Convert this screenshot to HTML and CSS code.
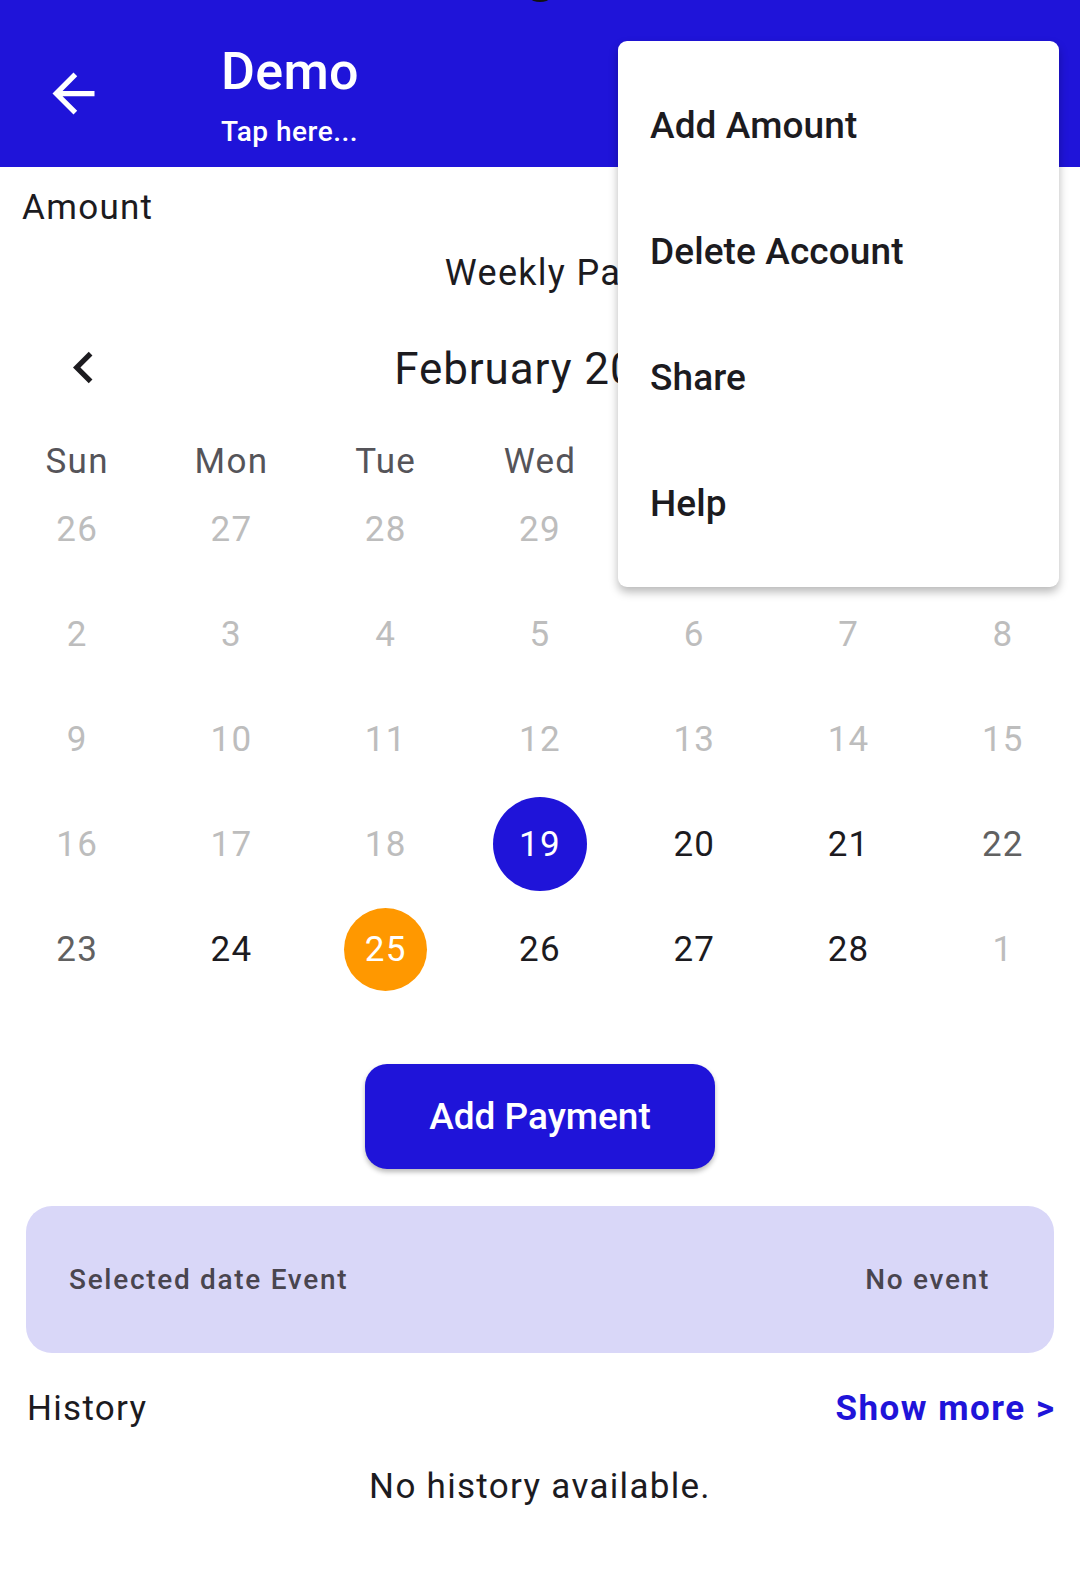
FILE: index.html
```html
<!DOCTYPE html>
<html lang="en">
<head>
<meta charset="utf-8">
<title>Demo</title>
<link rel="stylesheet" href="styles.css">
</head>
<body>
<div class="screen">
  <header class="appbar">
    <svg class="back" viewBox="0 0 24 24" width="63" height="63"><path fill="#fff" d="M20 11H7.83l5.59-5.59L12 4l-8 8 8 8 1.41-1.41L7.83 13H20v-2z"/></svg>
    <div class="titles">
      <div class="title">Demo</div>
      <div class="subtitle">Tap here...</div>
    </div>
  </header>
  <div class="notch"></div>

  <div class="amount">Amount</div>
  <div class="weekly">Weekly Pay</div>

  <div class="cal-head">
    <svg class="chev" viewBox="0 0 24 24" width="63" height="63"><path fill="#1c1b1f" d="M15.41 7.41L14 6l-6 6 6 6 1.41-1.41L10.83 12z"/></svg>
    <div class="month">February 2025</div>
    <svg class="chev" viewBox="0 0 24 24" width="63" height="63"><path fill="#1c1b1f" d="M8.59 16.59L10 18l6-6-6-6-1.41 1.41L13.17 12z"/></svg>
  </div>

  <div class="dow">
    <span>Sun</span><span>Mon</span><span>Tue</span><span>Wed</span><span>Thu</span><span>Fri</span><span>Sat</span>
  </div>

  <div class="dates">
    <span class="off">26</span><span class="off">27</span><span class="off">28</span><span class="off">29</span><span class="off">30</span><span class="off">31</span><span class="off">1</span>
    <span class="off">2</span><span class="off">3</span><span class="off">4</span><span class="off">5</span><span class="off">6</span><span class="off">7</span><span class="off">8</span>
    <span class="off">9</span><span class="off">10</span><span class="off">11</span><span class="off">12</span><span class="off">13</span><span class="off">14</span><span class="off">15</span>
    <span class="off">16</span><span class="off">17</span><span class="off">18</span><span class="sel"><b>19</b></span><span>20</span><span>21</span><span class="wk">22</span>
    <span class="wk">23</span><span>24</span><span class="today"><b>25</b></span><span>26</span><span>27</span><span>28</span><span class="off">1</span>
  </div>

  <div class="btn-row"><button class="add-btn">Add Payment</button></div>

  <div class="event-card">
    <span>Selected date Event</span>
    <span>No event</span>
  </div>

  <div class="history-row">
    <span class="history">History</span>
    <span class="more">Show more &gt;</span>
  </div>
  <div class="empty">No history available.</div>

  <div class="menu">
    <div class="item">Add Amount</div>
    <div class="item">Delete Account</div>
    <div class="item">Share</div>
    <div class="item">Help</div>
  </div>
</div>
</body>
</html>
```

FILE: styles.css
```css
* { box-sizing: border-box; }
html, body { margin: 0; padding: 0; }
body {
  width: 1080px;
  height: 1592px;
  overflow: hidden;
  background: #fff;
  font-family: Roboto, "Noto Sans", sans-serif;
  color: #1c1b1f;
}
.screen { position: relative; width: 1080px; height: 1592px; }

.appbar {
  height: 167px;
  background: #1f14d9;
  display: flex;
  align-items: flex-start;
  padding-left: 42px;
}
.back { margin-top: 61.5px; flex: none; }
.titles { margin-left: 116px; padding-top: 42px; color: #fff; }
.title { font-size: 52px; font-weight: 500; line-height: 60px; letter-spacing: 0.3px; }
.subtitle { font-size: 28px; font-weight: 500; line-height: 34px; margin-top: 13px; letter-spacing: 0.5px; }

.notch {
  position: absolute;
  left: 531px; top: -5px;
  width: 18px; height: 7px;
  border-radius: 50%;
  background: #111;
}

.amount {
  margin-top: 21px;
  padding-left: 22px;
  font-size: 35px;
  line-height: 40px;
  letter-spacing: 1.3px;
}
.weekly {
  margin-top: 25px;
  padding-left: 4px;
  text-align: center;
  font-size: 36px;
  line-height: 40px;
  letter-spacing: 1.3px;
}

.cal-head {
  margin-top: 43px;
  height: 66px;
  display: flex;
  align-items: center;
  justify-content: space-between;
  padding: 0 45px 0 52px;
}
.chev { flex: none; margin-top: -4px; }
.month { font-size: 44px; line-height: 66px; letter-spacing: 0.9px; margin-left: -6px; }

.dow {
  margin-top: 43.5px;
  display: grid;
  grid-template-columns: repeat(7, 1fr);
  height: 31px;
  font-size: 35px;
  line-height: 31px;
  letter-spacing: 1.3px;
  color: #555459;
  text-align: center;
}

.dates {
  display: grid;
  grid-template-columns: repeat(7, 1fr);
  grid-auto-rows: 105px;
  font-size: 35px;
  letter-spacing: 1.2px;
  text-align: center;
  color: #1c1b1f;
}
.dates span {
  display: flex;
  align-items: center;
  justify-content: center;
  line-height: 41px;
}
.dates .off { color: #bdbdbd; }
.dates .wk { color: #616161; }
.dates b { font-weight: 400; color: #fff; display: flex; align-items: center; justify-content: center; border-radius: 50%; }
.dates .sel b { width: 94px; height: 94px; background: #1f14d9; }
.dates .today b { width: 83px; height: 83px; background: #ff9800; }

.btn-row { display: flex; justify-content: center; margin-top: 62.5px; }
.add-btn {
  width: 350px;
  height: 105px;
  border: none;
  border-radius: 22px;
  background: #1f14d9;
  color: #fff;
  font-family: Roboto, sans-serif;
  font-size: 37px;
  font-weight: 500;
  box-shadow: 0 3px 5px rgba(0,0,0,0.28);
  padding: 0;
}

.event-card {
  margin: 37px 26px 0;
  height: 147px;
  border-radius: 26px;
  background: #d9d7f8;
  display: flex;
  align-items: center;
  justify-content: space-between;
  padding: 0 64px 0 43px;
  font-size: 28px;
  font-weight: 500;
  letter-spacing: 1.7px;
  color: #49454f;
}

.history-row {
  margin-top: 36px;
  display: flex;
  justify-content: space-between;
  padding: 0 26px 0 27px;
  font-size: 35px;
  line-height: 40px;
  letter-spacing: 1.3px;
}
.more { color: #1f14d9; font-weight: 700; letter-spacing: 1.5px; margin-right: -1.5px; }
.empty {
  margin-top: 38px;
  text-align: center;
  font-size: 35px;
  line-height: 40px;
  letter-spacing: 1.3px;
}

.menu {
  position: absolute;
  left: 618px; top: 41px;
  width: 441px; height: 546px;
  background: #fff;
  border-radius: 9px;
  box-shadow: 0 5px 10px rgba(0,0,0,0.28);
  padding: 21px 0;
}
.item {
  height: 126px;
  display: flex;
  align-items: center;
  padding-left: 32px;
  font-size: 37px;
  font-weight: 500;
  letter-spacing: 0.1px;
  color: #1c1b1f;
}
```
